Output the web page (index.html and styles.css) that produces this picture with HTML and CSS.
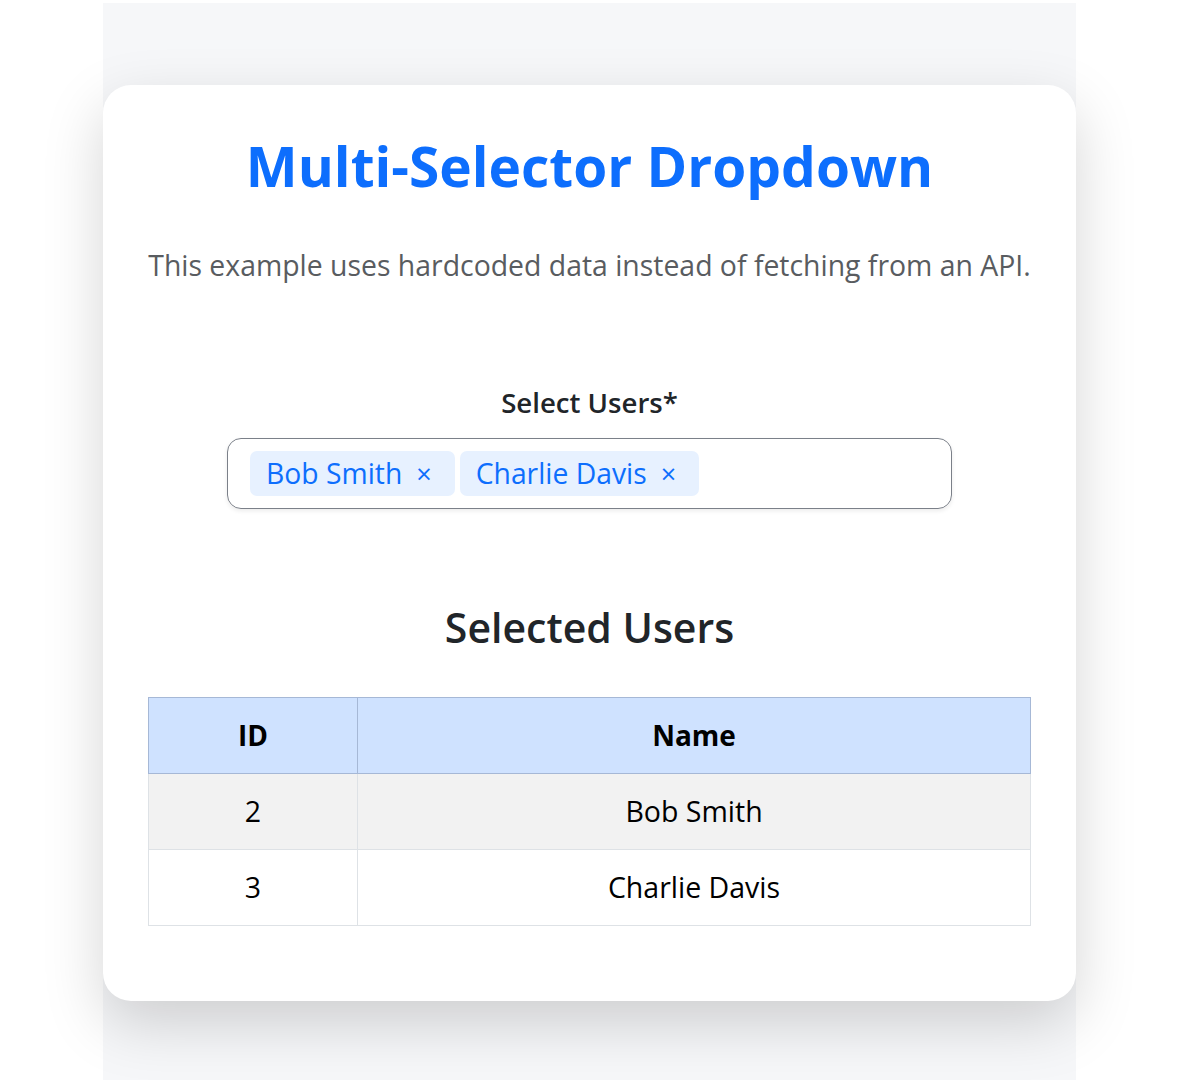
FILE: index.html
```html
<!DOCTYPE html>
<html lang="en">
<head>
<meta charset="utf-8">
<title>Multi-Selector Dropdown</title>
<link rel="stylesheet" href="styles.css">
</head>
<body>
<div class="page">
  <main class="card">
    <h1 class="title">Multi-Selector Dropdown</h1>
    <p class="subtitle">This example uses hardcoded data instead of fetching from an API.</p>

    <div class="field">
      <label class="label">Select Users*</label>
      <div class="select">
        <span class="chip">Bob Smith <span class="chip-x">×</span></span>
        <span class="chip">Charlie Davis <span class="chip-x">×</span></span>
      </div>
    </div>

    <h2 class="heading">Selected Users</h2>
    <table class="users">
      <thead>
        <tr><th class="col-id">ID</th><th>Name</th></tr>
      </thead>
      <tbody>
        <tr class="odd"><td>2</td><td>Bob Smith</td></tr>
        <tr><td>3</td><td>Charlie Davis</td></tr>
      </tbody>
    </table>
  </main>
</div>
</body>
</html>
```

FILE: styles.css
```css
html, body {
  margin: 0;
  padding: 0;
  background: #ffffff;
}
body {
  font-family: "Open Sans", "Noto Sans", sans-serif;
  overflow: hidden;
  height: 1080px;
}
.page {
  width: 973px;
  margin: 3px 0 0 103px;
  padding-top: 82px;
  background: #f6f7f9;
  height: 1100px;
  box-sizing: border-box;
}
.card {
  background: #ffffff;
  border-radius: 28px;
  box-shadow: 0 22px 60px rgba(0, 0, 0, 0.17);
  padding: 45px 45px 75px;
  display: flex;
  flex-direction: column;
  align-items: center;
}
.title {
  margin: 3px 0 0;
  font-size: 55px;
  font-weight: 700;
  color: #0d6efd;
  line-height: 1.2;
}
.subtitle {
  margin: 47px 0 0;
  font-size: 28.4px;
  color: #595c60;
  line-height: 1.4;
}
.field {
  margin-top: 97px;
  display: flex;
  flex-direction: column;
  align-items: center;
  gap: 17px;
}
.label {
  font-size: 27.6px;
  font-weight: 600;
  color: #212529;
}
.select {
  width: 725px;
  height: 71px;
  box-sizing: border-box;
  border: 1px solid #7b8089;
  border-radius: 14px;
  box-shadow: 0 2px 4px rgba(0, 0, 0, 0.08);
  padding: 12px 22px;
  display: flex;
  align-items: center;
  gap: 5px;
}
.chip {
  display: flex;
  align-items: center;
  gap: 14px;
  height: 45px;
  padding: 0 23px 0 16px;
  background: #e7f1ff;
  color: #0d6efd;
  border-radius: 7px;
  font-size: 28.3px;
}
.chip-x {
  font-size: 27px;
}
.heading {
  margin: 94px 0 0;
  font-size: 41px;
  font-weight: 600;
  color: #212529;
  line-height: 1.2;
}
.users {
  margin-top: 45px;
  width: 883px;
  border-collapse: collapse;
  font-size: 28.5px;
  color: #000;
}
.users th, .users td {
  height: 75px;
  padding: 0;
  text-align: center;
  border: 1px solid #dee2e6;
}
.users th {
  background: #cfe2ff;
  border-color: #a6b8d6;
  font-weight: 700;
  font-size: 28px;
}
.users .col-id {
  width: 208px;
}
.users tr.odd td {
  background: #f2f2f2;
}
```
